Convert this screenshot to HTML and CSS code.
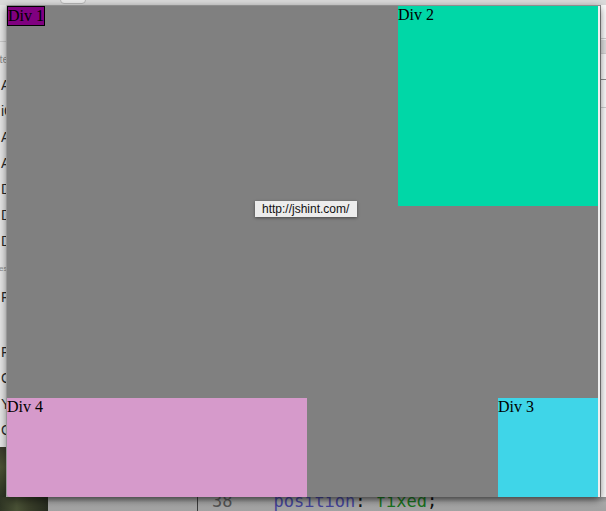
FILE: index.html
```html
<!DOCTYPE html>
<html>
<head>
<meta charset="utf-8">
<link rel="stylesheet" href="styles.css">
</head>
<body>
<div class="desk">
  <div class="topbar"><span class="tab"></span></div>
  <div class="side">
    <div class="side-top"></div>
    <div class="side-head">ite</div>
    <div class="item">A</div>
    <div class="item">iC</div>
    <div class="item">A</div>
    <div class="item">A</div>
    <div class="item">D</div>
    <div class="item">D</div>
    <div class="item">D</div>
    <div class="side-head small">es</div>
    <div class="item">F</div>
    <div class="item gap">F</div>
    <div class="item">C</div>
    <div class="item">Y</div>
    <div class="item">G</div>
    <div class="photo"></div>
  </div>
  <div class="window">
    <div class="viewport">
      <div class="row">
        <div class="box div1">Div 1</div>
        <div class="box div2">Div 2</div>
      </div>
      <div class="row row-bottom">
        <div class="box div4">Div 4</div>
        <div class="box div3">Div 3</div>
      </div>
      <div class="tooltip">http://jshint.com/</div>
    </div>
    <div class="edge"></div>
  </div>
  <div class="rside">
    <div class="r-line r1"></div>
    <div class="r-block"></div>
    <div class="r-line r2"></div>
    <div class="r-line r3"></div>
  </div>
  <div class="bottom">
    <div class="photo-b"></div>
    <div class="gutter"></div>
    <div class="code"><span class="ln">38</span>    <span class="prop">position</span>: <span class="val">fixed</span>;</div>
  </div>
</div>
</body>
</html>
```
FILE: styles.css
```css
html, body {
  margin: 0;
  padding: 0;
  width: 606px;
  height: 511px;
  overflow: hidden;
}

.desk {
  display: grid;
  grid-template-columns: 7px 593px 6px;
  grid-template-rows: 5px 492px 14px;
  width: 606px;
  height: 511px;
  background: #d8d8d8;
}

.topbar {
  grid-column: 1 / 4;
  grid-row: 1;
  background: #dadada;
  position: relative;
  overflow: hidden;
}

.tab {
  position: absolute;
  left: 60px;
  top: -6px;
  width: 24px;
  height: 8px;
  background: #ececec;
  border: 1px solid #b8b8b8;
  border-radius: 4px;
}

.side {
  grid-column: 1;
  grid-row: 2 / 3;
  background: #e4e4e4;
  overflow: hidden;
  display: flex;
  flex-direction: column;
  font-family: "Liberation Sans", Arial, sans-serif;
  font-size: 14px;
  color: #2a2a2a;
  border-right: 1px solid #c9c9c9;
  box-sizing: border-box;
  position: relative;
}

.side-top {
  height: 36px;
  border-bottom: 1px solid #c8c8c8;
  flex: none;
}

.side-head {
  height: 26px;
  line-height: 26px;
  font-size: 11px;
  color: #8a8a8a;
  margin-left: -3px;
  margin-top: 4px;
  flex: none;
}

.side-head.small {
  font-size: 8px;
  height: 30px;
  line-height: 30px;
  margin-top: 0;
  margin-left: -1px;
}

.item {
  height: 26px;
  line-height: 26px;
  padding-left: 1px;
  flex: none;
  white-space: nowrap;
}

.item.gap {
  margin-top: 29px;
}

.photo {
  position: absolute;
  left: 0;
  right: 0;
  top: 442px;
  bottom: 0;
  background: linear-gradient(180deg, #3a3a2c 0%, #4b5234 40%, #2e3524 100%);
}

.window {
  grid-column: 2;
  grid-row: 2;
  display: flex;
  border-top: 1px solid #8e8e8e;
  position: relative;
  z-index: 2;
  box-shadow: 0 3px 8px rgba(0, 0, 0, 0.55);
  border-bottom-left-radius: 3px;
  overflow: hidden;
}

.viewport {
  width: 591px;
  height: 491px;
  background: #808080;
  display: flex;
  flex-direction: column;
  justify-content: space-between;
  position: relative;
  font-family: "Liberation Serif", "Times New Roman", serif;
  font-size: 16px;
  color: #000;
}

.edge {
  width: 2px;
  background: #efefef;
}

.row {
  display: flex;
  justify-content: space-between;
  align-items: flex-start;
}

.row-bottom {
  align-items: flex-end;
}

.box {
  box-sizing: border-box;
  line-height: 18px;
  white-space: nowrap;
}

.div1 {
  background: #800080;
  border: 1px solid #000;
  height: 20px;
  line-height: 18px;
}

.div2 {
  width: 200px;
  height: 200px;
  background: #00d7a7;
}

.div3 {
  width: 100px;
  height: 99px;
  background: #3fd5e8;
}

.div4 {
  width: 300px;
  height: 99px;
  background: #d69acb;
}

.tooltip {
  position: absolute;
  left: 248px;
  top: 195px;
  height: 16px;
  line-height: 16px;
  padding: 0 8px 0 7px;
  background: #ececec;
  font-family: "Liberation Sans", Arial, sans-serif;
  font-size: 12px;
  color: #111;
  box-shadow: 0 1px 3px rgba(0, 0, 0, 0.45);
}

.rside {
  grid-column: 3;
  grid-row: 2;
  background: #fbfbfb;
  border-left: 1px solid #8a8a8a;
  display: flex;
  flex-direction: column;
  box-sizing: border-box;
  overflow: hidden;
}

.r-line {
  flex: none;
  border-bottom: 1px solid #d0d0d0;
}

.r1 { height: 33px; }

.r-block {
  flex: none;
  height: 13px;
  background: #dedede;
  margin-top: 1px;
  border-bottom: 1px solid #d0d0d0;
}

.r2 {
  height: 25px;
  border-bottom: 1px solid #8e8e8e;
}

.r3 {
  height: 27px;
}

.bottom {
  grid-column: 1 / 4;
  grid-row: 3;
  display: flex;
  background: linear-gradient(180deg, #8f8f8f 0%, #a9a9a9 40%, #a2a2a2 100%);
  overflow: hidden;
}

.photo-b {
  width: 48px;
  flex: none;
  background: linear-gradient(90deg, #2f3524 0%, #4a5236 35%, #3a3f2a 60%, #262b1f 100%);
}

.gutter {
  width: 149px;
  flex: none;
  border-right: 1px solid #3c3c3c;
}

.code {
  padding-left: 14px;
  margin-top: -3px;
  font-family: "DejaVu Sans Mono", "Liberation Mono", monospace;
  font-size: 17px;
  line-height: 14px;
  white-space: pre;
  color: #111;
}

.ln { color: #555; }
.prop { color: #45459a; }
.val { color: #1a7420; }
```
